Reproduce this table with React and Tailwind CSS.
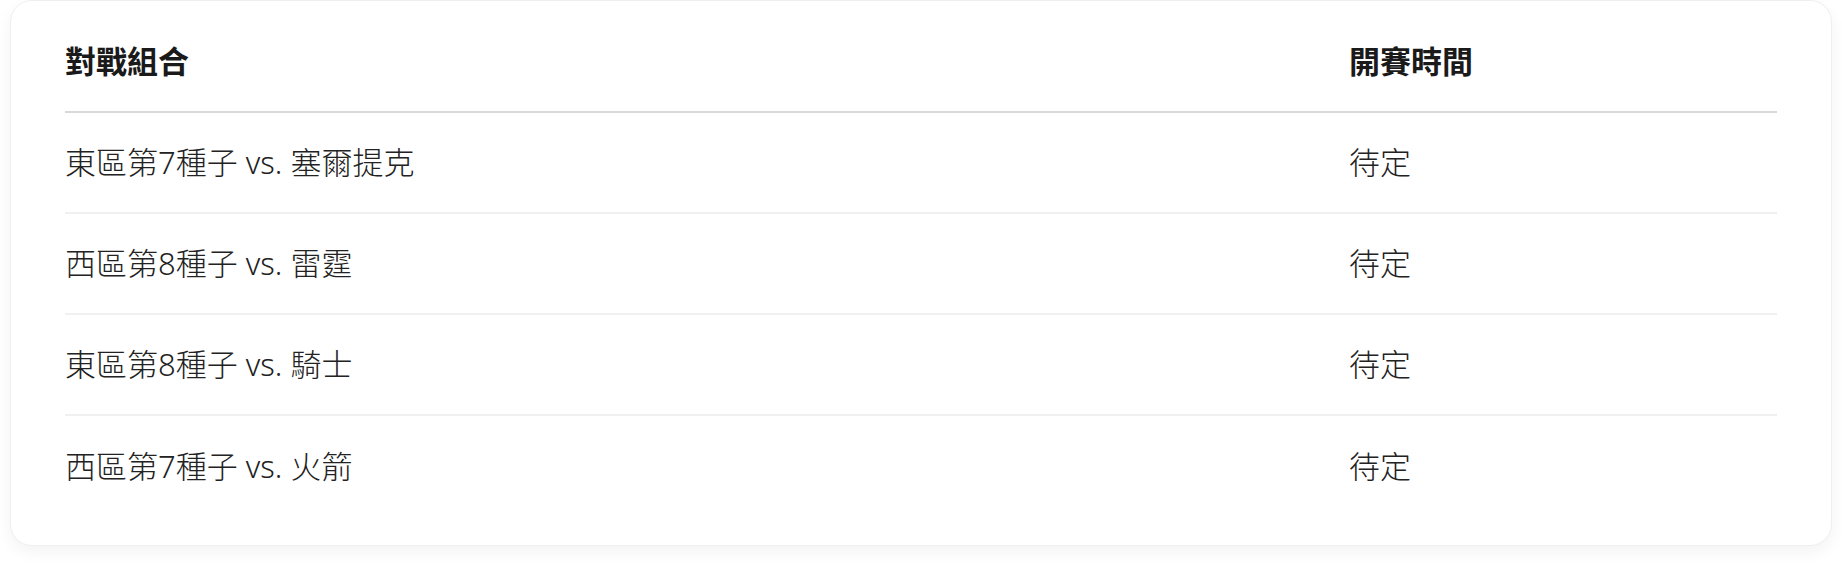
import React from "react";

const matches = [
  { pair: "東區第7種子 vs. 塞爾提克", time: "待定" },
  { pair: "西區第8種子 vs. 雷霆", time: "待定" },
  { pair: "東區第8種子 vs. 騎士", time: "待定" },
  { pair: "西區第7種子 vs. 火箭", time: "待定" },
];

function App() {
  return (
    <div
      className="w-full min-h-[566px] bg-white px-[10px] pb-[23px]"
      style={{ fontFamily: '"Noto Sans", "Noto Sans CJK TC", sans-serif' }}
    >
      <div className="rounded-[22px] border border-[#efefef] bg-white px-[54px] pt-[11px] pb-[28px] shadow-[0_6px_16px_rgba(0,0,0,0.05)]">
        {/* 표 머리 */}
        <div className="grid grid-cols-[75%_25%] border-b-2 border-[#d9d9d9] h-[101px] items-center text-[31px] font-bold text-[#1a1a1a]">
          <div>對戰組合</div>
          <div>開賽時間</div>
        </div>
        {matches.map((m, i) => (
          <div
            key={i}
            className={`grid grid-cols-[75%_25%] h-[101px] items-center text-[31px] font-light text-[#222] ${
              i < matches.length - 1 ? "border-b-2 border-[#f0f0f0]" : ""
            }`}
          >
            <div>{m.pair}</div>
            <div>{m.time}</div>
          </div>
        ))}
      </div>
    </div>
  );
}

export default App;
